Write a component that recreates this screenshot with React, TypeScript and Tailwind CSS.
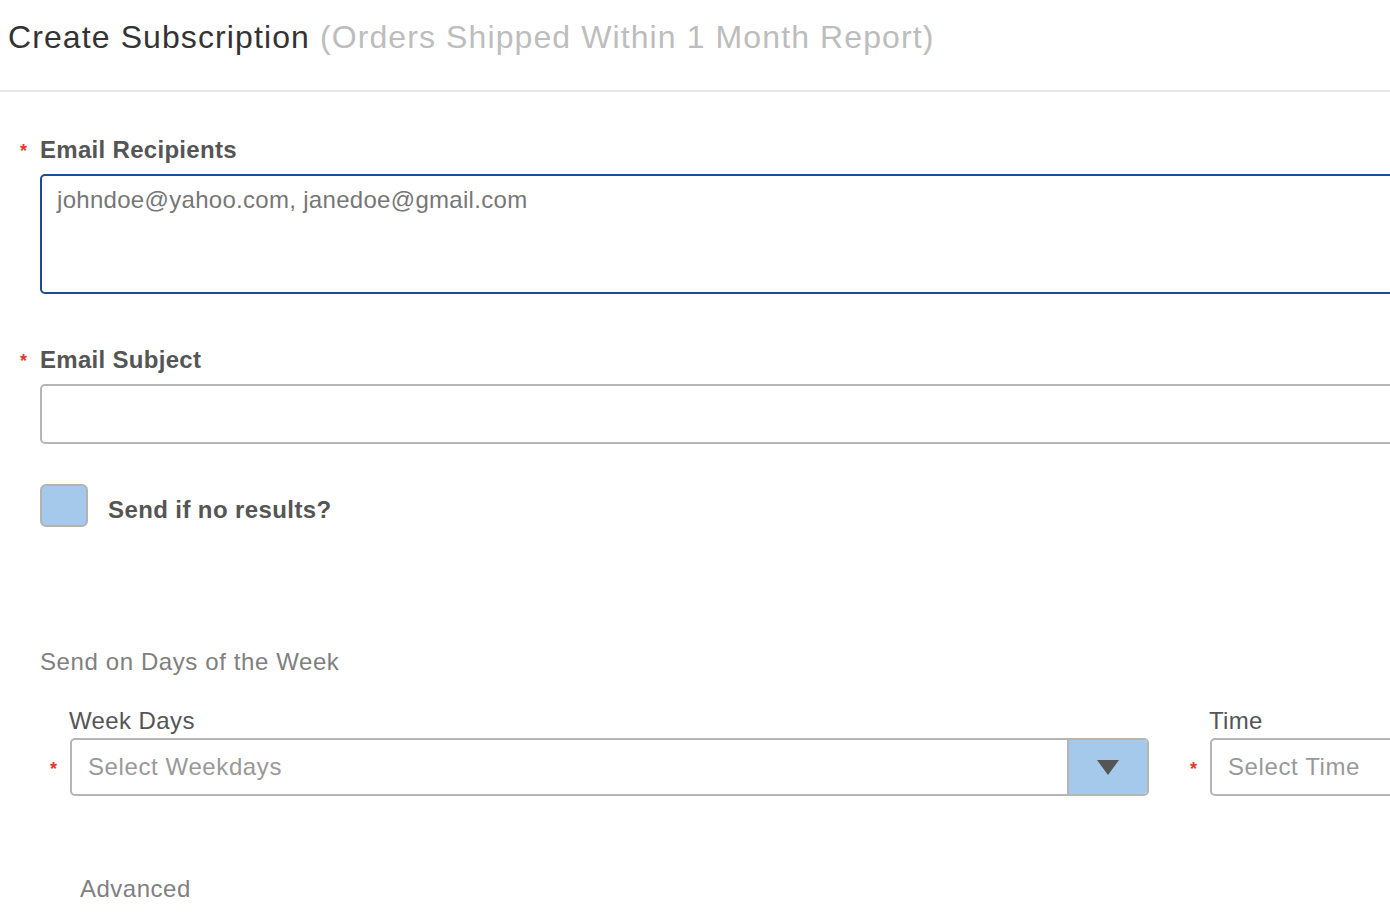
import React from "react"

const font = { fontFamily: '"Liberation Sans", Arial, Helvetica, sans-serif' }

const Star = ({ className = "" }: { className?: string }) => (
    <span className={`text-[#e8362c] font-bold text-[18px] leading-none ${className}`}>*</span>
)

const FieldLabel: React.FC<{ text: string }> = ({ text }) => (
    <div className="flex items-center h-[28px]">
        <div className="w-[20px] flex items-center pt-[2px]">
            <Star />
        </div>
        <span className="text-[24px] font-bold text-[#555555] tracking-[0.3px] leading-[28px]">{text}</span>
    </div>
)

const App = () => {
    return (
        <div className="w-full overflow-hidden bg-white min-h-[920px]" style={font}>
            {/* titre */}
            <div className="w-[1600px] border-b-2 border-[#e6e6e6] pl-[8px] pt-[19px] pb-[34px]">
                <h1 className="text-[32px] leading-[37px] tracking-[1.1px] text-[#333333] whitespace-nowrap">
                    Create Subscription{" "}
                    <span className="text-[#bdbdbd]">(Orders Shipped Within 1 Month Report)</span>
                </h1>
            </div>

            <div className="w-[1600px] pl-[20px]">
                {/* destinataires */}
                <div className="mt-[44px]">
                    <FieldLabel text="Email Recipients" />
                    <div className="ml-[20px] mt-[10px] h-[120px] border-2 border-[#1d4b93] rounded-[5px] px-[15px] pt-[10px]">
                        <p className="text-[24px] leading-[28px] text-[#777777] tracking-[0.3px]">
                            johndoe@yahoo.com, janedoe@gmail.com
                        </p>
                    </div>
                </div>

                {/* sujet */}
                <div className="mt-[52px]">
                    <FieldLabel text="Email Subject" />
                    <div className="ml-[20px] mt-[10px] h-[60px] border-2 border-[#b5b5b5] rounded-[5px]" />
                </div>

                {/* case a cocher */}
                <div className="ml-[20px] mt-[40px] flex items-center gap-[20px]">
                    <div className="w-[48px] h-[43px] bg-[#a4c9ea] border-2 border-[#b3b3b3] rounded-[6px]" />
                    <span className="mt-[8px] text-[24px] font-bold text-[#555555] tracking-[0.4px] leading-[28px]">
                        Send if no results?
                    </span>
                </div>

                {/* jours */}
                <div className="ml-[20px] mt-[121px]">
                    <p className="text-[24px] leading-[28px] text-[#808080] tracking-[0.6px]">Send on Days of the Week</p>
                </div>

                <div className="mt-[31px] flex items-end ml-[30px]">
                    <div>
                        <p className="ml-[19px] text-[24px] leading-[28px] text-[#555555] tracking-[0.4px] mb-[3px]">Week Days</p>
                        <div className="flex items-center">
                            <div className="w-[20px] flex pt-[4px]"><Star /></div>
                            <div className="w-[1079px] h-[58px] border-2 border-[#b5b5b5] rounded-[5px] flex overflow-hidden">
                                <div className="flex-1 flex items-center pl-[16px] text-[24px] text-[#999999] tracking-[0.6px]">
                                    Select Weekdays
                                </div>
                                <div className="w-[80px] bg-[#a4c9ea] border-l-2 border-[#b5b5b5] flex items-center justify-center">
                                    <svg width="22" height="15" viewBox="0 0 22 15">
                                        <polygon points="0,0 22,0 11,15" fill="#555555" />
                                    </svg>
                                </div>
                            </div>
                        </div>
                    </div>

                    <div className="ml-[41px]">
                        <p className="ml-[19px] text-[24px] leading-[28px] text-[#555555] tracking-[0.3px] mb-[3px]">Time</p>
                        <div className="flex items-center">
                            <div className="w-[20px] flex pt-[4px]"><Star /></div>
                            <div className="w-[320px] h-[58px] border-2 border-[#b5b5b5] rounded-[5px] flex items-center pl-[16px] text-[24px] text-[#999999] tracking-[0.6px]">
                                Select Time
                            </div>
                        </div>
                    </div>
                </div>

                <div className="ml-[60px] mt-[79px]">
                    <p className="text-[24px] leading-[28px] text-[#808080] tracking-[0.5px]">Advanced</p>
                </div>
            </div>
        </div>
    )
}

export default App
